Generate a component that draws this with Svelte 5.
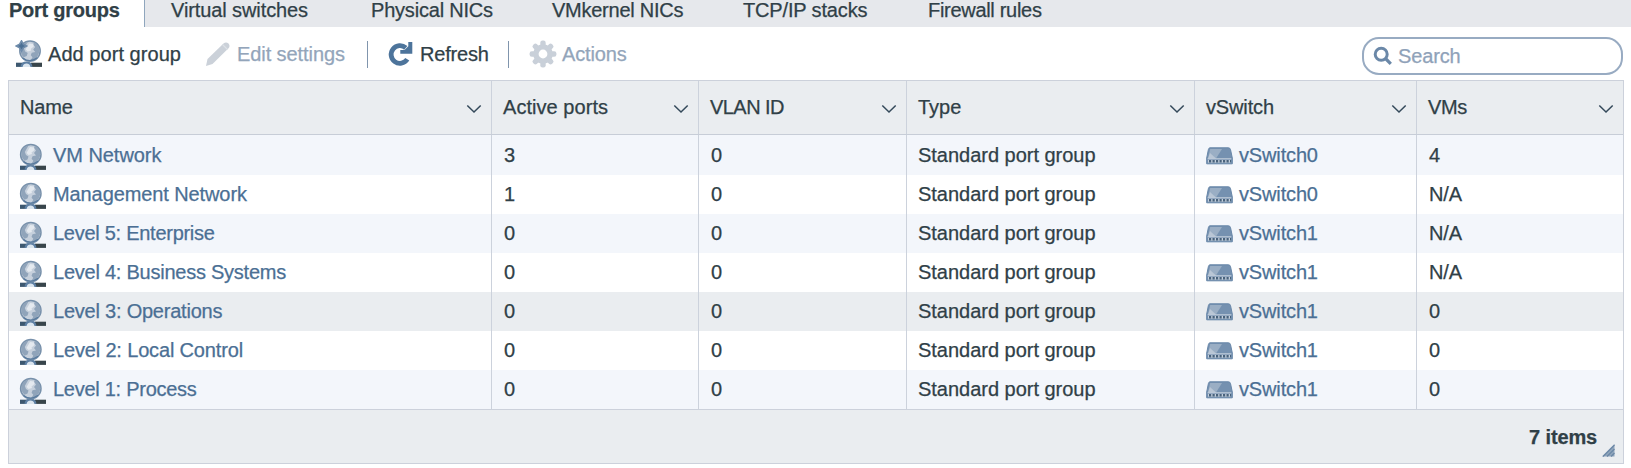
<script>
  const tabs = [
    { label: 'Port groups', w: 143, pad: 9, ls: -0.25 },
    { label: 'Virtual switches', w: 199, pad: 26, ls: -0.1 },
    { label: 'Physical NICs', w: 181, pad: 27, ls: -0.2 },
    { label: 'VMkernel NICs', w: 191, pad: 27, ls: -0.25 },
    { label: 'TCP/IP stacks', w: 186, pad: 27, ls: -0.15 },
    { label: 'Firewall rules', w: 180, pad: 26, ls: -0.3 }
  ];
  const columns = [
    { label: 'Name', ls: -0.15 },
    { label: 'Active ports', ls: 0.05 },
    { label: 'VLAN ID', ls: -0.55 },
    { label: 'Type', ls: 0 },
    { label: 'vSwitch', ls: -0.15 },
    { label: 'VMs', ls: -0.4 }
  ];
  const rows = [
    { name: 'VM Network', ls: -0.05, ports: 3, vs: 'vSwitch0', vms: '4' },
    { name: 'Management Network', ls: -0.1, ports: 1, vs: 'vSwitch0', vms: 'N/A' },
    { name: 'Level 5: Enterprise', ls: -0.27, ports: 0, vs: 'vSwitch1', vms: 'N/A' },
    { name: 'Level 4: Business Systems', ls: -0.24, ports: 0, vs: 'vSwitch1', vms: 'N/A' },
    { name: 'Level 3: Operations', ls: -0.22, ports: 0, vs: 'vSwitch1', vms: '0', hover: true },
    { name: 'Level 2: Local Control', ls: -0.16, ports: 0, vs: 'vSwitch1', vms: '0' },
    { name: 'Level 1: Process', ls: -0.27, ports: 0, vs: 'vSwitch1', vms: '0' }
  ];
</script>

{#snippet globe(add)}
  <svg class="globe" width="28" height="28" viewBox="0 0 28 28">
    <rect x="1" y="22.7" width="9" height="4.2" fill="#3d5870" />
    <rect x="16" y="22.7" width="11" height="4.2" fill="#38454b" />
    <path d="M5.5 26.9 Q6 21.5 11.5 21.5 Q17 21.5 17.5 26.9Z" fill="#5d7fa3" />
    <path d="M7.5 26.9 Q8.5 23.6 11.5 23.6 Q14.5 23.6 15.5 26.9Z" fill="#dce6ef" />
    <g transform={add ? 'translate(3.2 -.5)' : ''}>
      <circle cx="11.8" cy="11.6" r="10.2" fill="#c6d0dc" stroke="#7891ab" stroke-width="1.5" />
      <path d="M2.3 12 Q2 6.5 6 3.8 L9.5 2.5 L7.5 6 L5.8 9 L7 12 L9.5 13.5 L8.5 16.5 L5.5 17.8 Q2.8 15.5 2.3 12Z" fill="#90a4ba" />
      <path d="M16 2.5 Q20.5 5 21.3 10 Q21.5 16 16 20 L12.5 20.8 L14.3 17.8 L12.6 15.8 L13.5 13.3 L17 12.5 L15 10 L17 7.5 L15 5Z" fill="#90a4ba" />
      <path d="M11 4 L15 4.5 L15.5 7 L12.5 9.5 L13 11 L9.5 12 L7.5 10 L9.5 6.5Z" fill="#e4e9ef" />
      <path d="M4.5 18.5 Q11.5 24 19 18.3" fill="none" stroke="#57799d" stroke-width="1.3" />
    </g>
    {#if add}
      <path d="M6.5 .9 L8.3 4.2 L11.6 6 L8.3 7.8 L6.5 11.1 L4.7 7.8 L1.4 6 L4.7 4.2Z" fill="#4b6f94" stroke="#6f8cab" stroke-width="1.6" />
    {/if}
  </svg>
{/snippet}

<div class="page">
  <nav class="tabs">
    {#each tabs as t, i}
      <div class="tab" class:active={i === 0} style="width:{t.w}px;padding-left:{t.pad}px;letter-spacing:{t.ls}px">{t.label}</div>
    {/each}
  </nav>

  <div class="toolbar">
    <div class="tool add">{@render globe(true)}<span>Add port group</span></div>
    <div class="tool edit off">
      <svg width="26" height="26" viewBox="0 0 26 26">
        <path d="M1 25 L2.5 18 L18.5 2.5 Q21 .5 23.5 2.5 Q25.5 5 23.5 7.3 L7.5 23Z" fill="#cbd1d9" />
        <path d="M17.5 3.5 L22.5 8.5" stroke="#dce1e6" stroke-width="1.2" />
      </svg>
      <span>Edit settings</span>
    </div>
    <i class="sep"></i>
    <div class="tool refresh">
      <svg width="26" height="26" viewBox="0 0 26 26">
        <path d="M17.8 6.9 A8.8 8.8 0 1 0 19.3 18.3" fill="none" stroke="#4d749b" stroke-width="4.8" />
        <path d="M24.3 1 V12.7 H12.3 V9 H16.5 L20.3 5.2 V1Z" fill="#4d749b" />
      </svg>
      <span>Refresh</span>
    </div>
    <i class="sep second"></i>
    <div class="tool actions off">
      <svg width="28" height="28" viewBox="-14 -14 28 28">
        <g fill="#c9d0d9">
          {#each [0, 45, 90, 135] as a}
            <rect x="-2.7" y="-13.4" width="5.4" height="26.8" rx="2.2" transform="rotate({a})" />
          {/each}
          <circle r="9.8" />
        </g>
        <circle r="4.4" fill="#fff" />
      </svg>
      <span>Actions</span>
    </div>
    <div class="search">
      <svg width="20" height="20" viewBox="0 0 20 20">
        <circle cx="8.2" cy="8.2" r="6" fill="none" stroke="#6b88a8" stroke-width="3" />
        <path d="M12.5 12.5 L17.8 17.8" stroke="#6b88a8" stroke-width="3.2" />
      </svg>
      <span>Search</span>
    </div>
  </div>

  <div class="grid">
    <div class="row head">
      {#each columns as c}
        <div class="cell">
          <span style="letter-spacing:{c.ls}px">{c.label}</span>
          <svg width="16" height="10" viewBox="0 0 16 10"><path d="M1.3 1.5 L8 8 L14.7 1.5" fill="none" stroke="#34495a" stroke-width="1.5" /></svg>
        </div>
      {/each}
    </div>
    {#each rows as r, i}
      <div class="row" class:odd={i % 2 === 0} class:hover={r.hover}>
        <div class="cell link name">{@render globe(false)}<span style="letter-spacing:{r.ls}px">{r.name}</span></div>
        <div class="cell">{r.ports}</div>
        <div class="cell">0</div>
        <div class="cell type">Standard port group</div>
        <div class="cell link switch">
          <svg width="27" height="18" viewBox="0 0 27 18">
            <path d="M4 .8 H22.5 Q24 .8 24.5 2.5 L26.3 11 V16.8 H.7 V11 L2.4 2.5 Q2.8 .8 4 .8Z" fill="#7591b0" stroke="#6786a8" />
            <path d="M4.2 2 H16 L10 11.4 H2Z" fill="#9aaec4" />
            <path d="M2 11.4 L4 6 L10 11.4Z" fill="#b9c6d5" />
            <path d="M1.6 11.8 H25.4" stroke="#c8d3df" stroke-width="1" />
            <path d="M2 14.3 H25" stroke="#c3cfdb" stroke-width="2.8" />
            <path d="M3 14.3 H25" stroke="#48627c" stroke-width="2.4" stroke-dasharray="2.2 1.3" />
          </svg>
          <span>{r.vs}</span>
        </div>
        <div class="cell">{r.vms}</div>
      </div>
    {/each}
    <div class="foot">
      <span>7 items</span>
      <svg width="13" height="13" viewBox="0 0 13 13">
        <path d="M12.5 0 V12.5 H0Z" fill="#91a6bc" />
        <path d="M1 12.5 L12.5 1 M5 12.5 L12.5 5 M9 12.5 L12.5 9" stroke="#6c89a8" stroke-width="1.3" />
      </svg>
    </div>
  </div>
</div>

<style>
  :global(body) { background: #fff; overflow: hidden; }
  .page {
    box-sizing: border-box; width: 1631px; height: 468px; overflow: hidden;
    font: 20px/24px "Liberation Sans", Arial, sans-serif; color: #304047;
    letter-spacing: -0.15px; white-space: nowrap; -webkit-text-stroke: 0.25px currentColor;
  }
  .tabs { display: flex; height: 27px; background: #e6e8ec; }
  .tab { box-sizing: border-box; height: 27px; line-height: 21px; flex: none; }
  .tab.active { flex: 0 0 145px; background: #fff; font-weight: bold; border-right: 1px solid #8fa6bd; }
  .toolbar { display: flex; align-items: center; height: 54px; margin-bottom: -1px; padding: 0 8px 0 15px; box-sizing: border-box; }
  .tool { display: flex; align-items: center; flex: none; }
  .tool svg { flex: none; }
  .add { width: 190px; gap: 5px; letter-spacing: 0.05px; }
  .edit { width: 162px; gap: 6px; letter-spacing: -0.08px; }
  .off { color: #93a5ba; }
  .sep { width: 1px; height: 27px; background: #8095ad; margin-right: 20px; flex: none; }
  .refresh { width: 120px; gap: 6px; letter-spacing: -0.2px; }
  .second { margin-right: 20px; }
  .actions { gap: 5px; }
  .search {
    margin-left: auto; display: flex; align-items: center; gap: 5px; box-sizing: border-box;
    width: 261px; height: 38px; border: 2px solid #98abc2; border-radius: 17px;
    padding: 0 0 1px 9px; color: #8fa2b9; position: relative; top: 2px;
  }
  .search svg { flex: none; }
  .grid { width: 1614px; margin-left: 8px; border: 1px solid #ccd1db; height: 382px; }
  .row { display: grid; grid-template-columns: 483px 207px 208px 288px 222px 206px; height: 39px; background: #fff; }
  .row.odd { background: #f3f6fb; }
  .row.hover { background: #eaedf0; }
  .row.head { height: 54px; background: #eaedf0; border-bottom: 1px solid #c7cdd7; box-sizing: border-box; }
  .row.head + .row { height: 40px; }
  .cell { box-sizing: border-box; display: flex; align-items: center; padding: 0 0 2px 12px; border-right: 1px solid #ccd2dc; }
  .cell:last-child { border-right: 0; }
  .head .cell { justify-content: space-between; padding: 0 9px 2px 11px; }
  .head .cell svg { position: relative; top: 2px; flex: none; }
  .head + .row .cell { padding-bottom: 1px; }
  .link { color: #4b6f94; }
  .cell.type { padding-left: 11px; letter-spacing: -0.02px; }
  .cell.name { padding-left: 10px; gap: 6px; }
  .name .globe { position: relative; top: 2px; }
  .cell.switch { padding-left: 11px; gap: 6px; }
  .switch svg { position: relative; top: 1px; }
  .foot {
    display: flex; justify-content: flex-end; align-items: center; height: 54px; box-sizing: border-box;
    background: #eaedf0; border-top: 1px solid #ccd1db; padding-right: 8px; gap: 5px; font-weight: bold;
  }
  .foot svg { margin-top: 28px; }
</style>
